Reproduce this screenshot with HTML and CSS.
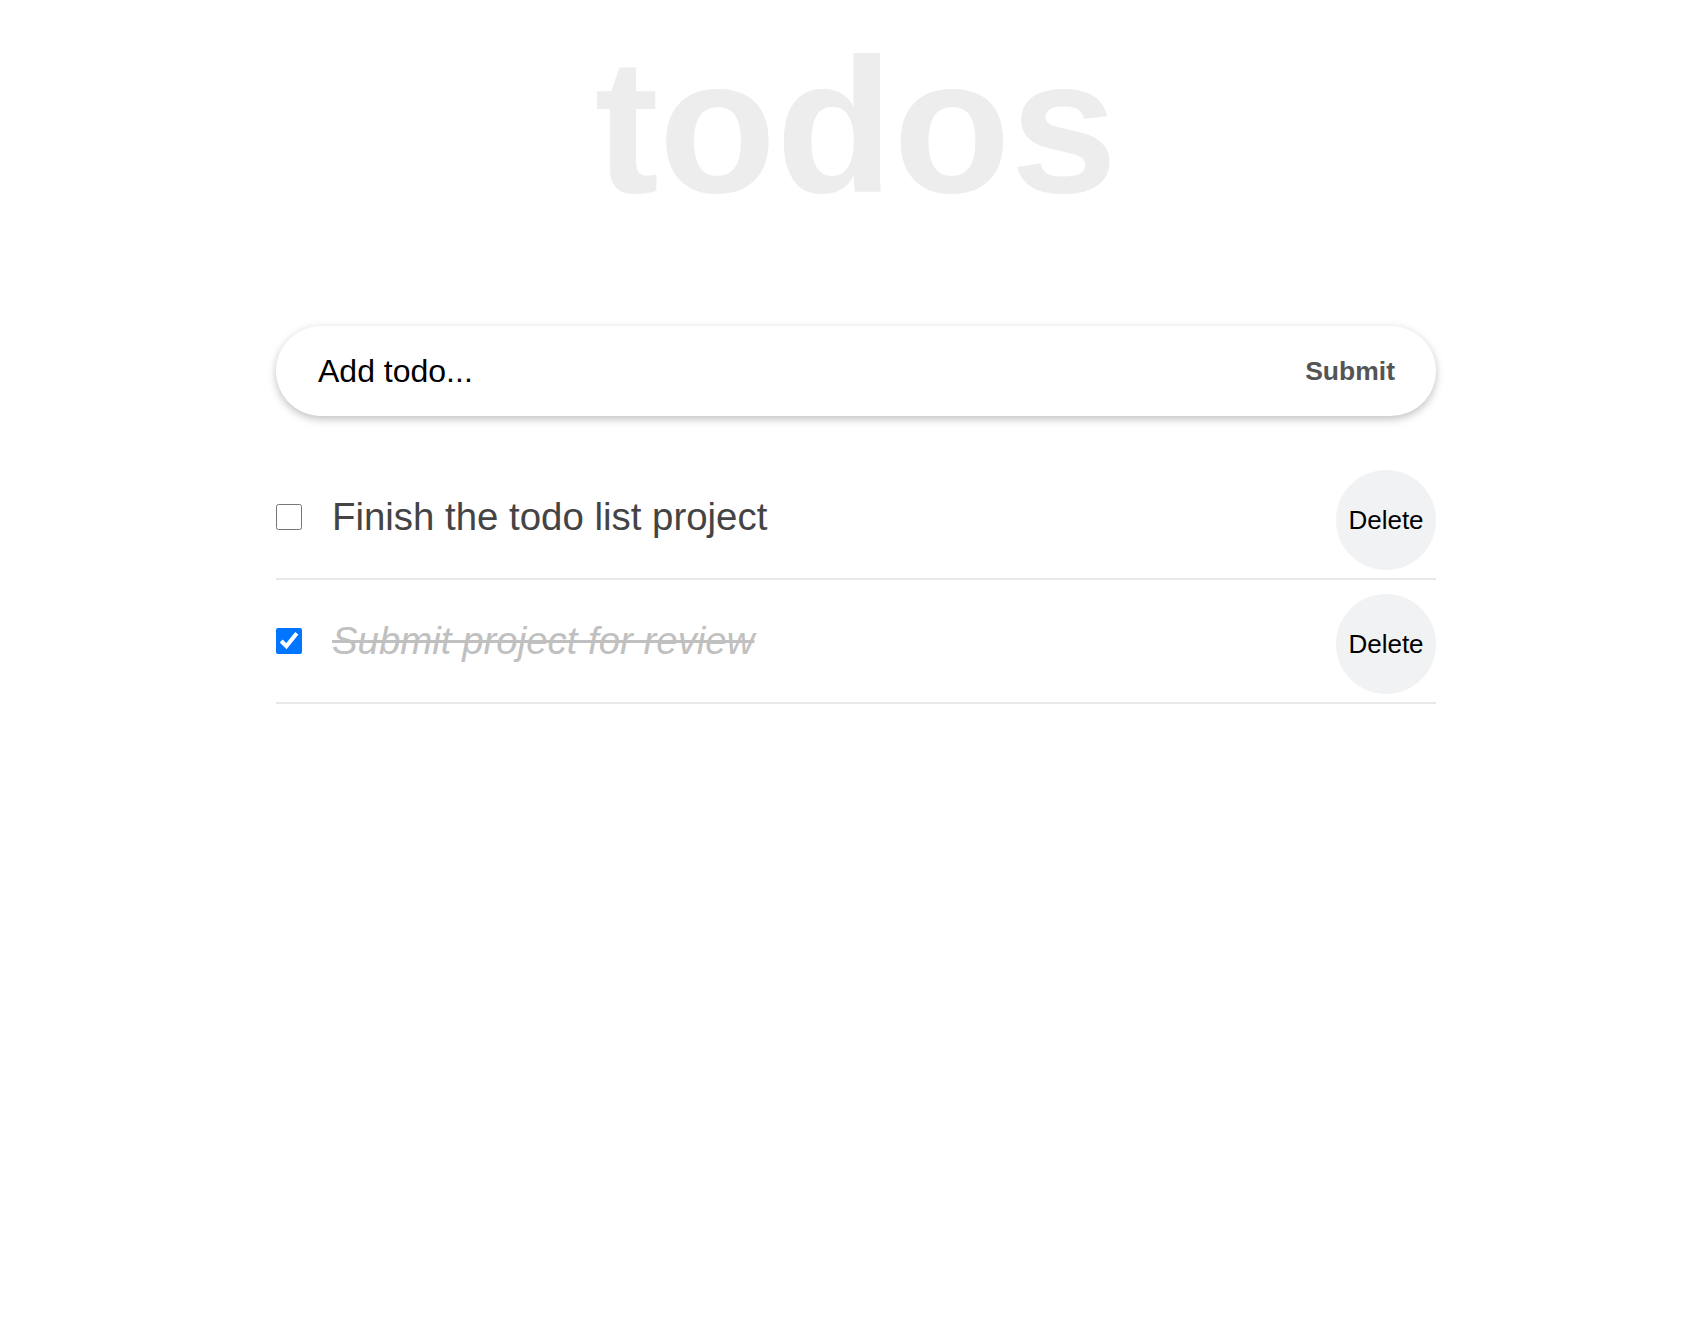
FILE: index.html
```html
<!DOCTYPE html>
<html lang="en">
<head>
<meta charset="utf-8">
<title>todos</title>
<link rel="stylesheet" href="styles.css">
</head>
<body>
  <h1 class="title">todos</h1>
  <main class="main">
    <form class="add-form">
      <input class="add-input" type="text" placeholder="Add todo...">
      <button class="submit-btn" type="button">Submit</button>
    </form>
    <ul class="todo-list">
      <li class="todo-item">
        <div class="todo-left">
          <input class="todo-check" type="checkbox">
          <span class="todo-text">Finish the todo list project</span>
        </div>
        <button class="delete-btn" type="button">Delete</button>
      </li>
      <li class="todo-item">
        <div class="todo-left">
          <input class="todo-check" type="checkbox" checked>
          <span class="todo-text done">Submit project for review</span>
        </div>
        <button class="delete-btn" type="button">Delete</button>
      </li>
    </ul>
  </main>
</body>
</html>
```
FILE: styles.css
```css
* { box-sizing: border-box; }

body {
  margin: 0;
  padding-left: 16px;
  background: #fff;
  font-family: "Liberation Sans", Arial, Helvetica, sans-serif;
}

.title {
  margin: 0;
  padding-top: 30px;
  font-size: 192px;
  line-height: 192px;
  font-weight: 700;
  color: #ededed;
  text-align: center;
}

.main {
  width: 1160px;
  margin: 104px auto 0;
}

.add-form {
  display: flex;
  align-items: center;
  height: 90px;
  padding: 0 41px 0 42px;
  border-radius: 45px;
  background: #fff;
  box-shadow: 0 3px 8px rgba(0, 0, 0, 0.25);
}

.add-input {
  flex: 1;
  min-width: 0;
  border: none;
  outline: none;
  padding: 0;
  background: transparent;
  font-family: inherit;
  font-size: 32px;
  color: #000;
}

.add-input::placeholder { color: #000; opacity: 1; }

.submit-btn {
  border: none;
  background: transparent;
  padding: 0;
  font-family: inherit;
  font-size: 26.5px;
  font-weight: 700;
  color: #555;
  cursor: pointer;
}

.todo-list {
  list-style: none;
  margin: 40px 0 0;
  padding: 0;
}

.todo-item {
  display: flex;
  align-items: center;
  justify-content: space-between;
  padding: 14px 0 8px;
  border-bottom: 2px solid #e8e8e8;
}

.todo-left {
  display: flex;
  align-items: center;
  gap: 30px;
  padding-bottom: 6px;
}

.todo-check {
  width: 26px;
  height: 26px;
  margin: 0;
}

.todo-text {
  font-size: 38.4px;
  color: #444;
}

.todo-text.done {
  color: #c0c0c0;
  font-style: italic;
  text-decoration: line-through;
}

.delete-btn {
  width: 100px;
  height: 100px;
  border: none;
  border-radius: 50%;
  background: #f0f2f3;
  padding: 0;
  font-family: inherit;
  font-size: 26px;
  color: #000;
  cursor: pointer;
}
```
